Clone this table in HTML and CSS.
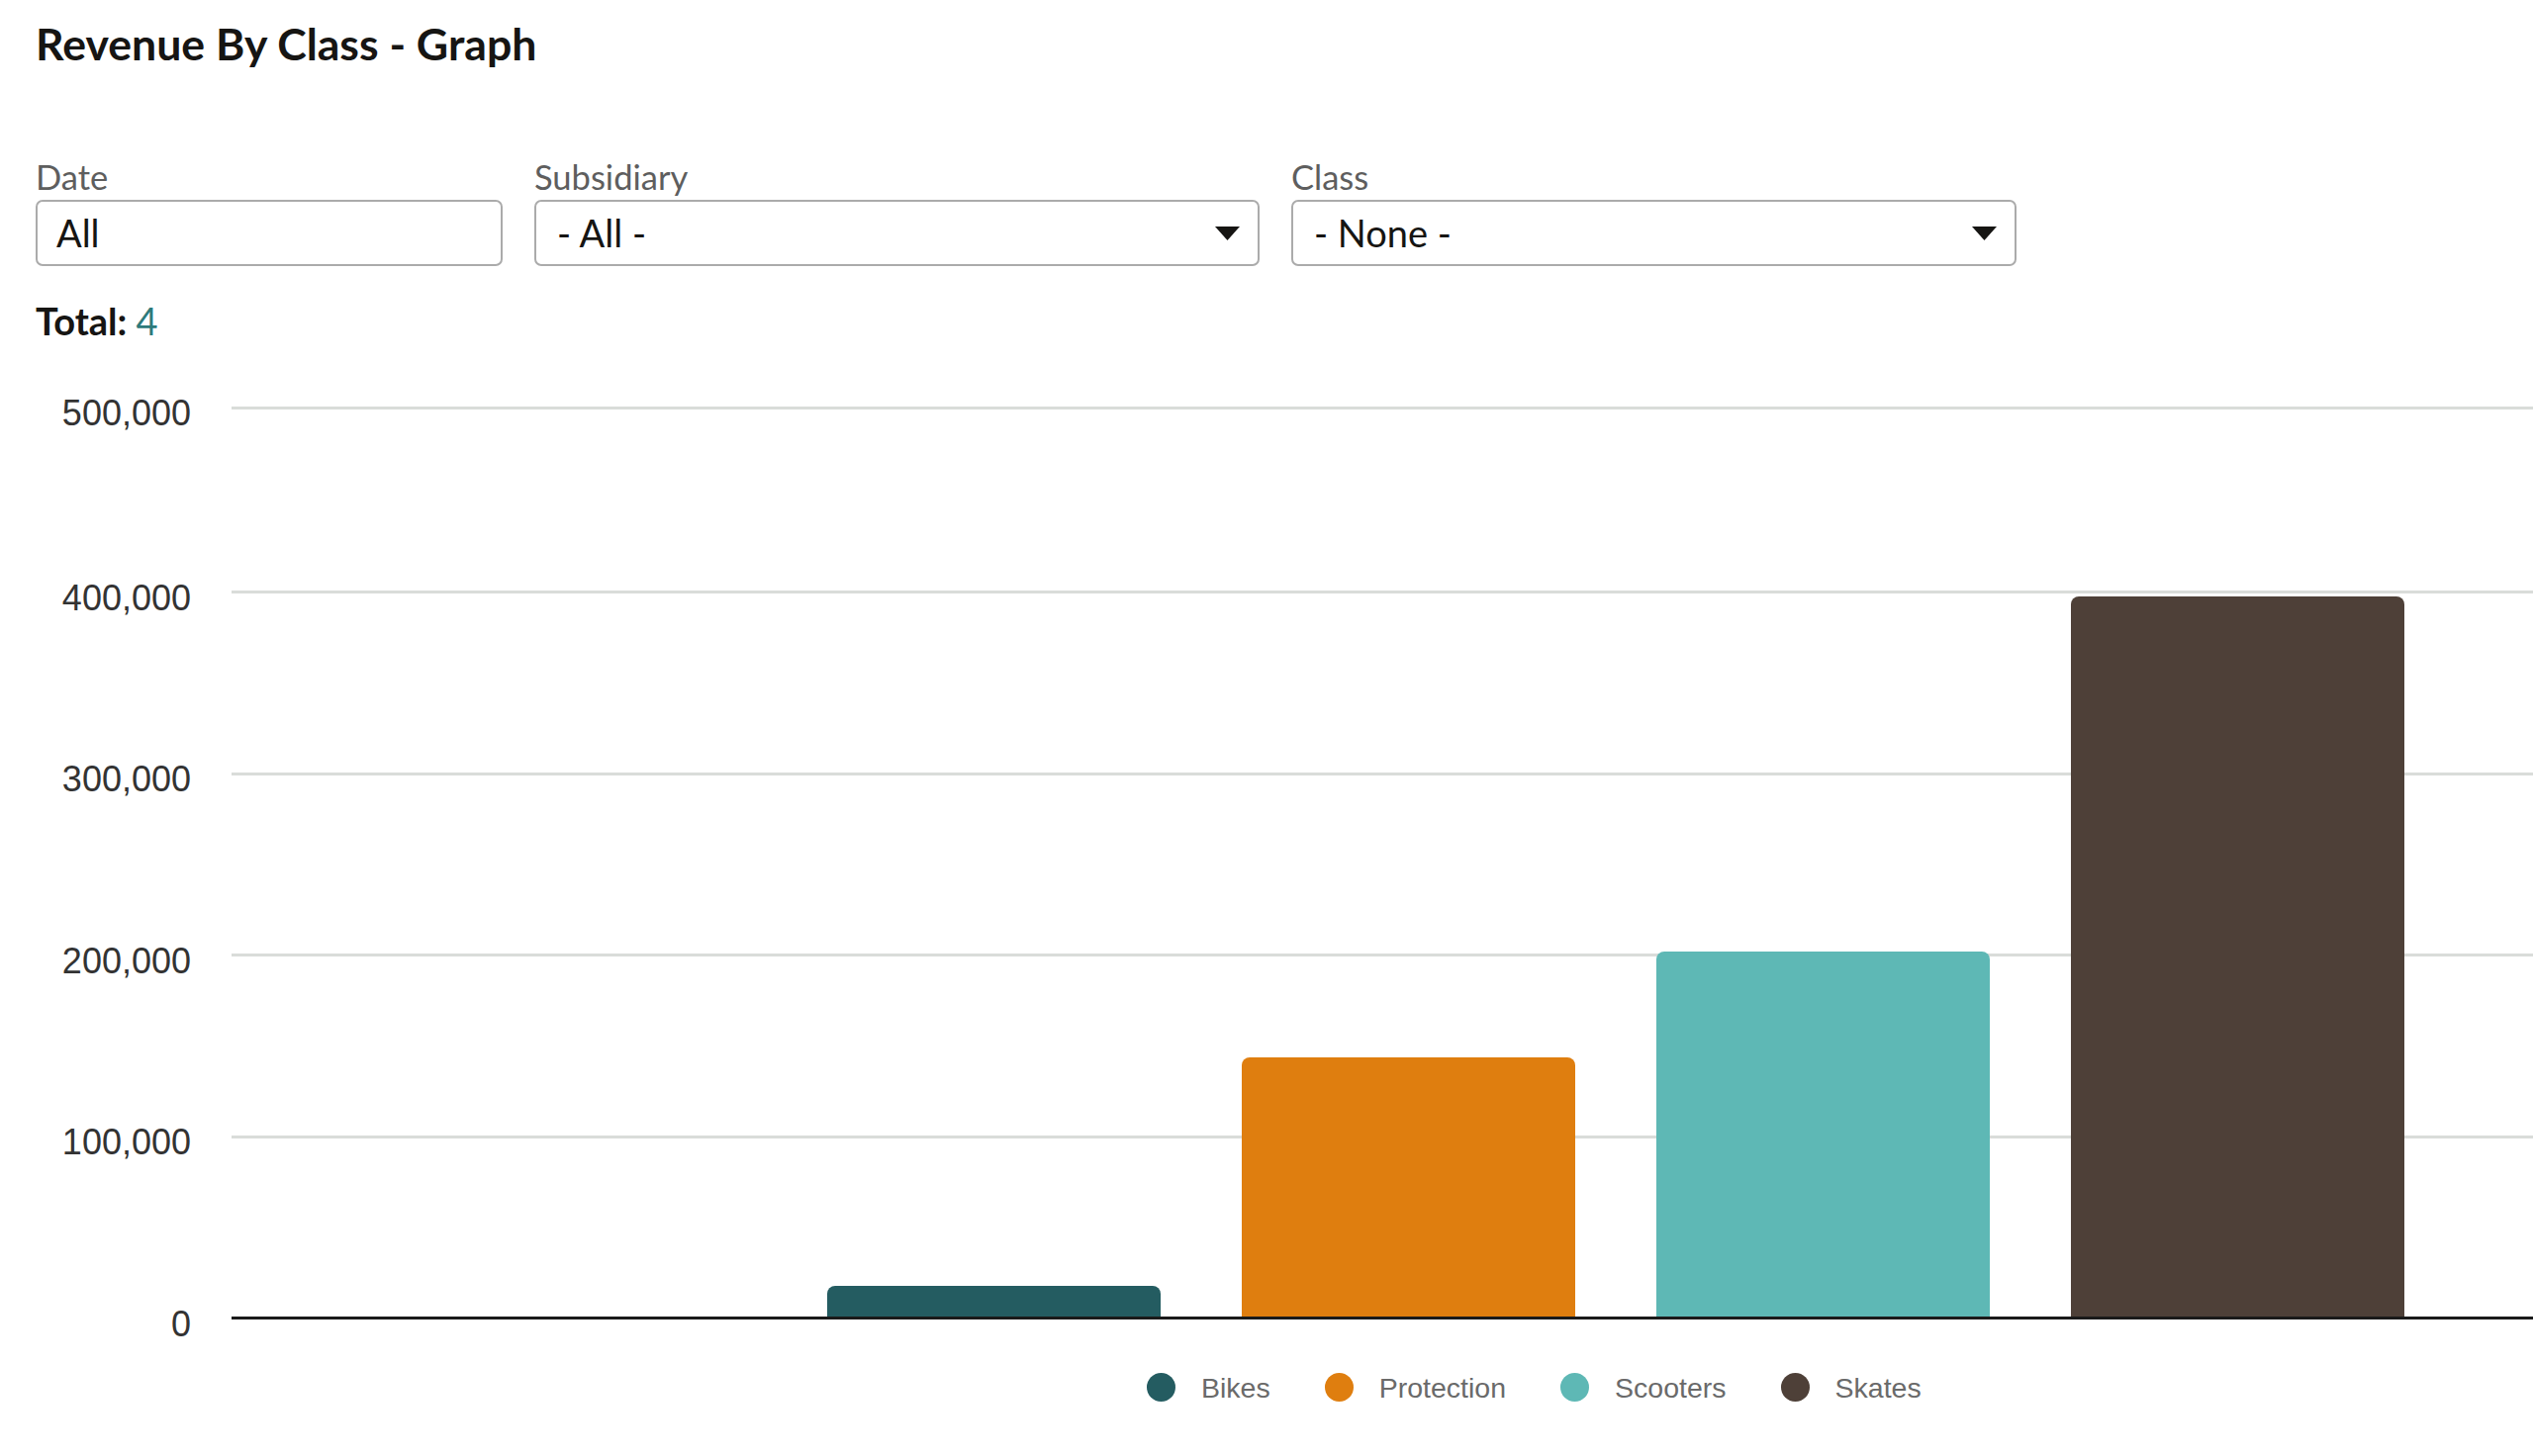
FILE: index.html
```html
<!DOCTYPE html>
<html lang="en">
<head>
<meta charset="utf-8">
<title>Revenue By Class - Graph</title>
<link rel="stylesheet" href="styles.css">
</head>
<body>
<div class="page">
  <h1 class="title">Revenue By Class - Graph</h1>

  <div class="filters">
    <div class="field">
      <label class="field-label">Date</label>
      <div class="input"><span class="input-text">All</span></div>
    </div>
    <div class="field">
      <label class="field-label">Subsidiary</label>
      <div class="input select"><span class="input-text">- All -</span>
        <svg class="caret" viewBox="0 0 25 14" width="25" height="14"><polygon points="0,0 25,0 12.5,14" /></svg>
      </div>
    </div>
    <div class="field">
      <label class="field-label">Class</label>
      <div class="input select"><span class="input-text">- None -</span>
        <svg class="caret" viewBox="0 0 25 14" width="25" height="14"><polygon points="0,0 25,0 12.5,14" /></svg>
      </div>
    </div>
  </div>

  <div class="total">Total: <span class="total-num">4</span></div>

  <div class="chart">
    <div class="yaxis">
      <div class="tick"><span>500,000</span></div>
      <div class="tick"><span>400,000</span></div>
      <div class="tick"><span>300,000</span></div>
      <div class="tick"><span>200,000</span></div>
      <div class="tick"><span>100,000</span></div>
      <div class="tick"><span>0</span></div>
    </div>
    <div class="plot">
      <div class="grid">
        <div class="gline"></div>
        <div class="gline"></div>
        <div class="gline"></div>
        <div class="gline"></div>
        <div class="gline"></div>
        <div class="gline base"></div>
      </div>
      <div class="bars">
        <div class="bar bikes" style="height:32px"></div>
        <div class="bar protection" style="height:263px"></div>
        <div class="bar scooters" style="height:370px"></div>
        <div class="bar skates" style="height:729px"></div>
      </div>
    </div>
  </div>

  <div class="legend">
    <div class="legend-item"><span class="dot bikes"></span><span class="legend-text">Bikes</span></div>
    <div class="legend-item"><span class="dot protection"></span><span class="legend-text">Protection</span></div>
    <div class="legend-item"><span class="dot scooters"></span><span class="legend-text">Scooters</span></div>
    <div class="legend-item"><span class="dot skates"></span><span class="legend-text">Skates</span></div>
  </div>
</div>
</body>
</html>
```

FILE: styles.css
```css
html, body {
  margin: 0;
  padding: 0;
  background: #ffffff;
  overflow: hidden;
}

.page {
  padding: 17px 0 0 36px;
  font-family: "Lato", "Open Sans", sans-serif;
  color: #161513;
}

.title {
  margin: 0;
  font-size: 44.6px;
  font-weight: 700;
  line-height: 1.2;
  color: #161513;
}

.filters {
  margin-top: 87.5px;
  display: grid;
  grid-template-columns: 472px 733px 733px;
  column-gap: 32px;
}

.field {
  display: flex;
  flex-direction: column;
}

.field-label {
  font-size: 34.5px;
  line-height: 1.2;
  color: #5e5e5e;
  margin-bottom: 3px;
}

.input {
  box-sizing: border-box;
  height: 67px;
  border: 2px solid #ababab;
  border-radius: 7px;
  display: flex;
  align-items: center;
  justify-content: space-between;
  padding: 0 18px 0 19px;
  background: #fff;
}

.input-text {
  font-size: 38px;
  line-height: 1.2;
  color: #161513;
}

.select .input-text {
  padding-left: 2px;
}

.caret {
  display: block;
  fill: #161513;
}

.total {
  margin-top: 33px;
  font-size: 38px;
  font-weight: 700;
  line-height: 1.2;
  color: #161513;
}

.total-num {
  font-weight: 400;
  color: #2d7a7b;
}

.chart {
  margin-top: 63px;
  margin-left: -36px;
  display: flex;
  font-family: "Liberation Sans", Arial, sans-serif;
}

.yaxis {
  width: 193px;
  flex: none;
  display: flex;
  flex-direction: column;
  margin-right: 41px;
}

.tick {
  height: 3px;
  display: flex;
  align-items: center;
  justify-content: flex-end;
}

.tick + .tick {
  margin-top: 180.5px;
}

.tick:nth-child(2) {
  margin-top: 183.5px;
}

.tick span {
  display: block;
  font-size: 36px;
  line-height: 40px;
  margin-top: 12px;
  color: #333333;
  white-space: nowrap;
}

.plot {
  flex: 1;
  display: grid;
}

.grid, .bars {
  grid-area: 1 / 1;
}

.grid {
  display: flex;
  flex-direction: column;
}

.gline {
  height: 3px;
  background: #d9dcd9;
}

.gline + .gline {
  margin-top: 180.5px;
}

.gline:nth-child(2) {
  margin-top: 183.5px;
}

.gline.base {
  background: #1a1a1a;
  position: relative;
  z-index: 2;
}

.bars {
  display: flex;
  align-items: flex-end;
  padding-left: 602px;
  padding-bottom: 2px;
  column-gap: 82px;
}

.bar {
  width: 337px;
  flex: none;
  border-radius: 8px 8px 0 0;
}

.bikes { background: #245c61; }
.protection { background: #df7e0f; }
.scooters { background: #5eb8b5; }
.skates { background: #4e4038; }

.legend {
  margin-top: 48.5px;
  padding-left: 1123px;
  display: flex;
  align-items: center;
  column-gap: 55px;
  font-family: "Liberation Sans", Arial, sans-serif;
}

.legend-item {
  display: flex;
  align-items: center;
  column-gap: 26px;
}

.dot {
  width: 29px;
  height: 29px;
  border-radius: 50%;
  display: block;
}

.legend-text {
  font-size: 28.5px;
  line-height: 40px;
  color: #6a6a6a;
}
```
